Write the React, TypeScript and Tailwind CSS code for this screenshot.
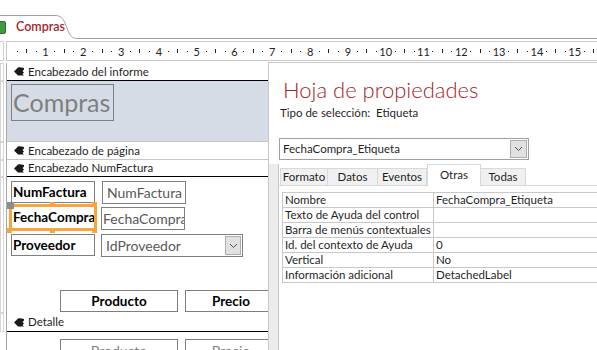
import { ReactNode } from "react";

const props = [
  ["Nombre", "FechaCompra_Etiqueta"],
  ["Texto de Ayuda del control", ""],
  ["Barra de menús contextuales", ""],
  ["Id. del contexto de Ayuda", "0"],
  ["Vertical", "No"],
  ["Información adicional", "DetachedLabel"],
];

function SectionIcon() {
  return (
    <svg width="10" height="9" viewBox="0 0 10 9" className="shrink-0">
      <path d="M10 1 C7 0 5 0 4 0.5 L0 4.5 L4 8.5 L10 8.5 L8.5 7 L10 5.5 L8.5 4 L10 2.5 Z" fill="#1a1a1a" />
    </svg>
  );
}

function Chevron() {
  return (
    <svg width="9" height="6" viewBox="0 0 9 6">
      <path d="M1 1 L4.5 4.5 L8 1" fill="none" stroke="#555" strokeWidth="1" />
    </svg>
  );
}

function Row({ h, left, children }: { h: string; left?: boolean; children: ReactNode }) {
  return (
    <div className={`flex ${h}`}>
      <div className="w-[7px] shrink-0 flex">
        <div className={`w-[4px] ${left ? "border border-[#d6d6d6] bg-white" : ""}`} />
        <div className="w-[3px] border-r border-[#a8a8a8]" />
      </div>
      <div className="flex-1 relative">{children}</div>
    </div>
  );
}

function SectionBar({ label, black }: { label: string; black?: boolean }) {
  return (
    <div
      className={`h-full flex items-center gap-[4px] pl-[7px] bg-white border-b ${
        black ? "border-black" : "border-[#c6c6c6]"
      } text-[11.5px] text-[#1f1f1f]`}
    >
      <SectionIcon />
      <span>{label}</span>
    </div>
  );
}

function Ruler() {
  const segs = Array.from({ length: 17 }, (_, i) => i);
  return (
    <div className="flex h-[24px] pt-[2px] pb-[2px]">
      <div className="w-[4px] border border-l-0 border-[#d0d0d0]" />
      <div className="w-[3px] border-r border-[#c8c8c8]" />
      <div className="flex-1 overflow-hidden border-y border-[#c8c8c8] bg-white">
        <div className="flex -ml-[4px] h-full items-center">
          {segs.map((i) => (
            <div key={i} className="flex shrink-0 w-[37.8px] items-center text-[11px] text-[#222] leading-none">
              <div className="w-[9.45px] flex justify-center">{i > 0 ? i : ""}</div>
              <div className="w-[9.45px] flex justify-center">
                <div className="w-[1px] h-[1px] bg-[#222]" />
              </div>
              <div className="w-[9.45px] flex justify-center">
                <div className="w-[1px] h-[4px] bg-[#222]" />
              </div>
              <div className="w-[9.45px] flex justify-center">
                <div className="w-[1px] h-[1px] bg-[#222]" />
              </div>
            </div>
          ))}
        </div>
      </div>
    </div>
  );
}

function Box({ cls, children }: { cls: string; children: ReactNode }) {
  return (
    <div className={`absolute border border-[#7f7f7f] bg-white overflow-hidden whitespace-nowrap flex items-center ${cls}`}>
      {children}
    </div>
  );
}

export default function App() {
  return (
    <div className="w-[597px] h-[350px] overflow-hidden bg-white relative font-['Lato',sans-serif] text-[#1f1f1f]">
      <div className="h-[15px]" />
      <div className="relative h-[24px] flex items-center">
        <svg className="absolute inset-0" width="597" height="24" viewBox="0 0 597 24">
          <path d="M0 0.5 H55 C60 0.5 63 3 65 8 L69 18 C71 22 73 23.5 78 23.5 H597" fill="none" stroke="#a0a0a0" />
        </svg>
        <div className="relative -ml-[8px] w-[14px] h-[13px] rounded-[2px] bg-[#3f9a42] border border-[#2b6e2e]" />
        <span className="relative ml-[10px] text-[12.5px] font-semibold text-[#a4262c]">Compras</span>
      </div>
      <Ruler />

      <div className="relative">
        <Row h="h-[18px]" left>
          <SectionBar label="Encabezado del informe" black />
        </Row>
        <Row h="h-[61px]" left>
          <div className="h-full bg-[#d6dce5] border-b border-[#c6c6c6]">
            <div className="absolute left-[4px] top-[3px] w-[103px] h-[37px] border border-[#7f7f7f] flex items-center pl-[1px] text-[25px] text-[#7f7f7f] leading-none">
              Compras
            </div>
          </div>
        </Row>
        <Row h="h-[18px]" left>
          <SectionBar label="Encabezado de página" />
        </Row>
        <Row h="h-[17px]" left>
          <SectionBar label="Encabezado NumFactura" black />
        </Row>
        <Row h="h-[136px]" left>
          <Box cls="left-[4px] top-[4px] w-[84px] h-[22px] pl-[1px] text-[13.5px] font-bold text-black">NumFactura</Box>
          <Box cls="left-[95px] top-[4px] w-[84px] h-[23px] pl-[4px] text-[14px] text-[#595959]">NumFactura</Box>
          <div className="absolute left-[2px] top-[27px] w-[88px] h-[27px] border-[3px] border-[#f7a63b] flex items-center pl-[1px] text-[13.5px] font-bold text-black overflow-hidden whitespace-nowrap">
            FechaCompra
          </div>
          <div className="absolute left-[0px] top-[25px] w-[7px] h-[7px] bg-[#8c8c8c]" />
          <div className="absolute left-[43px] top-[25px] w-[5px] h-[5px] bg-[#f7a63b]" />
          <div className="absolute left-[85px] top-[25px] w-[5px] h-[5px] bg-[#f7a63b]" />
          <div className="absolute left-[0px] top-[51px] w-[5px] h-[5px] bg-[#f7a63b]" />
          <div className="absolute left-[43px] top-[51px] w-[5px] h-[5px] bg-[#f7a63b]" />
          <div className="absolute left-[85px] top-[51px] w-[5px] h-[5px] bg-[#f7a63b]" />
          <Box cls="left-[94px] top-[30px] w-[84px] h-[23px] pl-[1px] text-[14px] text-[#595959]">FechaCompra</Box>
          <Box cls="left-[4px] top-[57px] w-[84px] h-[22px] pl-[1px] text-[13.5px] font-bold text-black">Proveedor</Box>
          <Box cls="left-[94px] top-[57px] w-[142px] h-[23px] pl-[4px] text-[14px] text-[#595959] justify-between pr-[1px]">
            <span>IdProveedor</span>
            <div className="w-[16px] h-[19px] bg-[#e1e1e1] border border-[#adadad] flex items-center justify-center">
              <Chevron />
            </div>
          </Box>
          <Box cls="left-[53px] top-[113px] w-[118px] h-[22px] justify-center text-[13.5px] font-bold text-black">Producto</Box>
          <Box cls="left-[178px] top-[113px] w-[118px] h-[22px] justify-center text-[13.5px] font-bold text-black">
            <span className="-ml-[26px]">Precio</span>
          </Box>
        </Row>
        <Row h="h-[19px]" left>
          <SectionBar label="Detalle" black />
        </Row>
        <Row h="h-[30px]">
          <Box cls="left-[53px] top-[7px] w-[118px] h-[22px] justify-center text-[14px] text-[#7f7f7f]">Producto</Box>
          <Box cls="left-[178px] top-[7px] w-[118px] h-[22px] justify-center text-[14px] text-[#7f7f7f]">
            <span className="-ml-[26px]">Precio</span>
          </Box>
        </Row>

        <div className="absolute left-[268px] top-[-1px] w-[329px] h-[290px] bg-white border-l border-t border-[#c8c8c8] flex flex-col">
          <div className="pl-[14px] pt-[13px] text-[22px] leading-[27px] text-[#a4262c] font-light">Hoja de propiedades</div>
          <div className="pl-[11px] mt-[2px] text-[11.5px] leading-[16px]">Tipo de selección:&nbsp; Etiqueta</div>
          <div className="ml-[10px] mt-[17px] w-[250px] h-[22px] border border-[#a0a0a0] flex items-center justify-between pl-[3px] pr-[1px] text-[11.5px]">
            <span>FechaCompra_Etiqueta</span>
            <div className="w-[17px] h-[18px] bg-[#e1e1e1] border border-[#adadad] flex items-center justify-center">
              <Chevron />
            </div>
          </div>
          <div className="flex flex-1 mt-[4px]">
            <div className="w-[10px] shrink-0 bg-[#ececec] border-r border-[#c8c8c8]" />
            <div className="flex-1 flex flex-col">
              <div className="flex items-end h-[22px] pl-[1px] border-b border-[#d9d9d9] text-[11.5px]">
                <div className="w-[48px] h-[17px] bg-[#f0f0f0] border border-b-0 border-[#d9d9d9] flex items-center justify-center">Formato</div>
                <div className="w-[50px] h-[17px] bg-[#f0f0f0] border border-b-0 border-l-0 border-[#d9d9d9] flex items-center justify-center">Datos</div>
                <div className="w-[49px] h-[17px] bg-[#f0f0f0] border border-b-0 border-l-0 border-[#d9d9d9] flex items-center justify-center">Eventos</div>
                <div className="w-[54px] h-[22px] bg-white border border-b-0 border-[#d9d9d9] -mb-[1px] flex justify-center pt-[1px]">Otras</div>
                <div className="w-[45px] h-[17px] bg-[#f0f0f0] border border-b-0 border-l-0 border-[#d9d9d9] flex items-center justify-center">Todas</div>
              </div>
              <div className="ml-[3px] mt-[6px] border-t border-l border-[#c8c8c8] text-[11.5px]">
                {props.map(([k, v]) => (
                  <div key={k} className="flex h-[15px] border-b border-[#c8c8c8] leading-[14px]">
                    <div className="w-[151px] shrink-0 border-r border-[#c8c8c8] pl-[2px] whitespace-nowrap overflow-hidden">{k}</div>
                    <div className="flex-1 pl-[2px]">{v}</div>
                  </div>
                ))}
              </div>
            </div>
          </div>
        </div>
      </div>
    </div>
  );
}
